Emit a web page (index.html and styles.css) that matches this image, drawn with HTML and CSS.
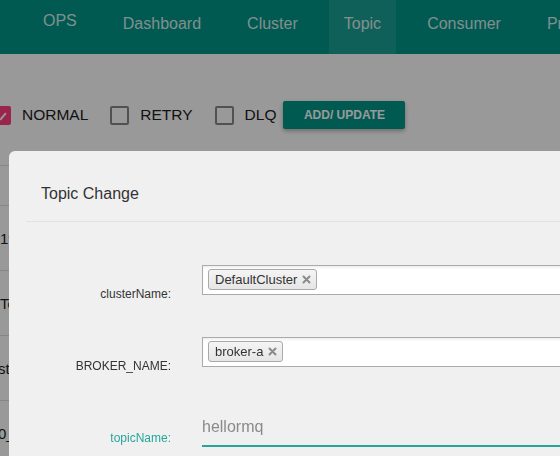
FILE: index.html
```html
<!DOCTYPE html>
<html>
<head>
    <meta charset="UTF-8">
    <title>RocketMQ Console - Topic</title>
    <link rel="stylesheet" href="styles.css">
</head>
<body>
    <nav class="navbar">
        <a class="brand">OPS</a>
        <a class="nav-item">Dashboard</a>
        <a class="nav-item">Cluster</a>
        <a class="nav-item active">Topic</a>
        <a class="nav-item">Consumer</a>
        <a class="nav-item">Producer</a>
        <a class="nav-item">Message</a>
    </nav>

    <main class="content">
        <div class="filter-bar">
            <label class="check checked"><span class="box"></span>NORMAL</label>
            <label class="check"><span class="box"></span>RETRY</label>
            <label class="check"><span class="box"></span>DLQ</label>
            <button class="btn-add">ADD/ UPDATE</button>
        </div>

        <div class="topic-table">
            <div class="table-head"></div>
            <div class="table-row"><span class="cell">192.168.0.1</span></div>
            <div class="table-row"><span class="cell">TestTopic</span></div>
            <div class="table-row"><span class="cell cut">stest</span></div>
            <div class="table-row"><span class="cell cut">0_topic</span></div>
        </div>
    </main>

    <div class="backdrop"></div>

    <div class="modal">
        <div class="modal-header">
            <h4 class="modal-title">Topic Change</h4>
        </div>
        <div class="modal-body">
            <div class="form-row">
                <label class="form-label">clusterName:</label>
                <div class="tag-select">
                    <span class="tag">DefaultCluster
                        <svg class="tag-remove" width="9" height="9" viewBox="0 0 9 9"><path d="M1.5 1.5 L7.5 7.5 M7.5 1.5 L1.5 7.5" stroke="#8a8a8a" stroke-width="2" stroke-linecap="round"/></svg>
                    </span>
                </div>
            </div>
            <div class="form-row">
                <label class="form-label">BROKER_NAME:</label>
                <div class="tag-select">
                    <span class="tag">broker-a
                        <svg class="tag-remove" width="9" height="9" viewBox="0 0 9 9"><path d="M1.5 1.5 L7.5 7.5 M7.5 1.5 L1.5 7.5" stroke="#8a8a8a" stroke-width="2" stroke-linecap="round"/></svg>
                    </span>
                </div>
            </div>
            <div class="form-row">
                <label class="form-label active">topicName:</label>
                <input class="text-input" type="text" value="hellormq">
            </div>
        </div>
    </div>
</body>
</html>
```

FILE: styles.css
```css
* {
    margin: 0;
    padding: 0;
    box-sizing: border-box;
}

body {
    font-family: "Liberation Sans", Arial, sans-serif;
    background-color: #ffffff;
    color: #212121;
    overflow: hidden;
}

/* 導覽列 */
.navbar {
    display: flex;
    gap: 16px;
    height: 54px;
    padding-left: 28px;
    background-color: #009688;
    white-space: nowrap;
    overflow: hidden;
}

.brand,
.nav-item {
    padding: 14px 15px 0;
    font-size: 16px;
    line-height: 19px;
    color: rgba(255, 255, 255, 0.85);
}

.brand {
    padding-top: 11px;
}

.nav-item.active {
    background-color: rgba(255, 255, 255, 0.1);
}

/* 篩選列 */
.content {
    margin-left: -8px;
}

.filter-bar {
    display: flex;
    align-items: center;
    margin-top: 47px;
    height: 28px;
}

.check {
    display: flex;
    align-items: center;
    font-size: 15.5px;
    color: #212121;
    margin-right: 22px;
}

.check:last-of-type {
    margin-right: 7px;
}

.check .box {
    width: 19px;
    height: 19px;
    border: 2px solid #888;
    border-radius: 2px;
    margin-right: 11px;
    position: relative;
}

.check.checked .box {
    background-color: #ff3d7f;
    border-color: #ff3d7f;
}

.check.checked .box::after {
    content: "";
    position: absolute;
    left: 8px;
    top: 4px;
    width: 2px;
    height: 9px;
    background: #fff;
    transform: rotate(40deg);
}

.btn-add {
    width: 122px;
    height: 28px;
    border: none;
    border-radius: 2px;
    background-color: #009688;
    color: #ffffff;
    font-family: inherit;
    font-size: 12px;
    font-weight: bold;
    box-shadow: 0 2px 4px rgba(0, 0, 0, 0.3);
}

/* 背景表格 */
.topic-table {
    margin-top: 36px;
    margin-left: 8px;
    border-top: 1px solid #e0e0e0;
}

.table-head {
    height: 40px;
    border-bottom: 1px solid #e0e0e0;
}

.table-row {
    height: 65px;
    display: flex;
    align-items: center;
    border-bottom: 1px solid #e0e0e0;
    font-size: 15px;
    color: #212121;
}

.cell.cut {
    margin-left: -2px;
}

/* 對話框 */
.backdrop {
    position: fixed;
    inset: 0;
    background-color: rgba(0, 0, 0, 0.4);
}

.modal {
    position: absolute;
    top: 151px;
    left: 9px;
    width: 640px;
    height: 400px;
    background-color: #f0f0f0;
    border-radius: 6px;
}

.modal-header {
    margin: 0 17px;
    padding: 33px 15px 17px;
    border-bottom: 1px solid #e2e2e2;
}

.modal-title {
    font-size: 16px;
    font-weight: normal;
    line-height: 20px;
    color: #333;
}

.modal-body {
    display: flex;
    flex-direction: column;
    gap: 36px;
    padding-top: 43px;
}

.form-row {
    display: grid;
    grid-template-columns: 162px 1fr;
    column-gap: 31px;
    align-items: start;
}

.form-label {
    padding-top: 22px;
    font-size: 12px;
    line-height: 14px;
    text-align: right;
    color: #333;
}

.form-label.active {
    color: #26a69a;
}

.tag-select {
    display: flex;
    align-items: flex-start;
    height: 30px;
    padding: 3px 5px;
    background-color: #ffffff;
    border: 1px solid #aaa;
    box-shadow: inset 0 3px 4px -3px rgba(0, 0, 0, 0.15);
}

.tag {
    display: flex;
    align-items: center;
    gap: 5px;
    height: 21px;
    padding: 0 5px 0 6px;
    font-size: 13px;
    color: #333;
    border: 1px solid #aaa;
    border-radius: 3px;
    background: linear-gradient(#f4f4f4, #e6e6e6);
}

.text-input {
    height: 38px;
    width: 100%;
    border: none;
    border-bottom: 2px solid #26a69a;
    background: transparent;
    font-family: inherit;
    font-size: 16px;
    color: #8a8a8a;
    outline: none;
}
```
